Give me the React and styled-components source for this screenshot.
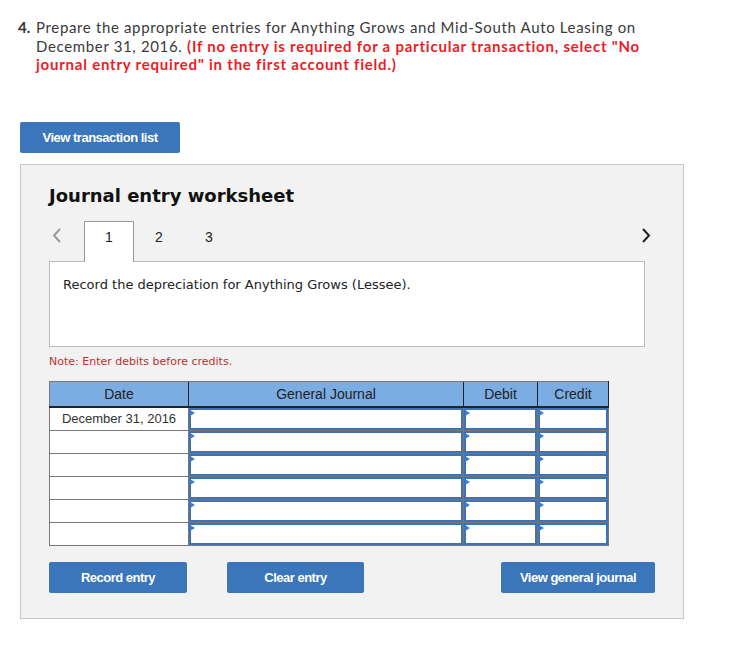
import React from 'react';
import styled, { createGlobalStyle } from 'styled-components';

const GlobalStyle = createGlobalStyle`
  body {
    margin: 0;
    background: #fff;
    font-family: "Liberation Sans", Arial, sans-serif;
  }
`;

const Page = styled.div`
  padding: 18px 0 0 20px;
  width: 739px;
  box-sizing: border-box;
`;

const Question = styled.p`
  margin: 0 0 0 -2px;
  padding-left: 18px;
  font-family: Lato, "Open Sans", sans-serif;
  font-size: 15px;
  line-height: 18.5px;
  letter-spacing: 0.65px;
  color: #3a3a3a;
  white-space: nowrap;
`;

const Num = styled.b`
  display: inline-block;
  width: 18px;
  margin-left: -18px;
  letter-spacing: 0;
  color: #333;
`;

const Warn = styled.span`
  color: #ee1c25;
  font-weight: 700;
  letter-spacing: 0.78px;
`;

const Button = styled.button`
  height: 31px;
  width: ${(p) => p.$w}px;
  border: none;
  border-radius: 2px;
  background: #3a76b9;
  color: #fff;
  font-family: "Liberation Sans Narrow", "Arial Narrow", "Liberation Sans", sans-serif;
  font-weight: 700;
  font-size: 13px;
  letter-spacing: -0.5px;
  padding: 0;
  cursor: pointer;
`;

const TopButton = styled(Button)`
  margin-top: 48px;
`;

const Panel = styled.div`
  margin-top: 11px;
  width: 664px;
  height: 455px;
  box-sizing: border-box;
  border: 1px solid #c8c8c8;
  background: #f2f2f2;
  padding: 20px 28px 0 28px;
`;

const Title = styled.h2`
  margin: 0;
  font-family: "DejaVu Sans", Verdana, sans-serif;
  font-size: 18px;
  line-height: 22px;
  color: #111;
`;

const TabRow = styled.div`
  margin-top: 13px;
  display: flex;
  align-items: flex-end;
  width: 606px;
  height: 41px;
`;

const Arrow = styled.div`
  width: 35px;
  height: 41px;
  display: flex;
  align-items: flex-start;
  padding-top: 8px;
  box-sizing: border-box;
  justify-content: ${(p) => (p.$right ? 'flex-end' : 'flex-start')};
  padding-left: ${(p) => (p.$right ? 0 : 3)}px;
  padding-right: ${(p) => (p.$right ? 4 : 0)}px;
  margin-left: ${(p) => (p.$right ? 'auto' : 0)};
`;

const Tab = styled.div`
  width: 50px;
  height: 41px;
  box-sizing: border-box;
  padding-top: 7px;
  text-align: center;
  font-size: 14px;
  line-height: 16px;
  color: #222;
  background: ${(p) => (p.$active ? '#fff' : 'transparent')};
  border: 1px solid ${(p) => (p.$active ? '#9a9a9a' : 'transparent')};
  border-bottom: none;
  position: relative;
  z-index: 1;
  margin-bottom: -1px;
`;

const Prompt = styled.div`
  width: 596px;
  height: 86px;
  box-sizing: border-box;
  background: #fff;
  border: 1px solid #bdbdbd;
  padding: 14px 13px;
  font-family: "DejaVu Sans", Verdana, sans-serif;
  font-size: 13px;
  line-height: 17px;
  color: #222;
`;

const Note = styled.div`
  margin-top: 8px;
  font-family: "DejaVu Sans", Verdana, sans-serif;
  font-size: 11px;
  line-height: 14px;
  color: #c0302e;
`;

const Table = styled.table`
  margin-top: 12px;
  border-collapse: collapse;
  width: 559px;
  table-layout: fixed;
  border: 1px solid #777;
`;

const Th = styled.th`
  height: 24px;
  padding: 0;
  background: #7badE3;
  font-weight: 400;
  font-size: 14px;
  color: #222;
  border-top: 1px solid #777;
  border-bottom: 2px solid #222;
  border-left: 1px solid #222;
  &:first-child {
    border-left: 1px solid #777;
  }
  &:last-child {
    border-right: 1px solid #222;
  }
`;

const DateCell = styled.td`
  height: 22px;
  padding: 0;
  background: #fff;
  border: 1px solid #777;
  text-align: center;
  font-size: 13px;
  color: #333;
`;

const InputCell = styled.td`
  height: 22px;
  padding: 0;
  border: 1px solid #777;
  background: #fff;
`;

const Field = styled.div`
  position: relative;
  height: 22px;
  box-sizing: border-box;
  border: 2px solid #3f72b4;
  background: #fff;
`;

const Caret = styled.span`
  position: absolute;
  left: -1px;
  top: 0;
  width: 0;
  height: 0;
  border-top: 3px solid transparent;
  border-bottom: 3px solid transparent;
  border-left: 5px solid #3a7bd5;
`;

const ButtonRow = styled.div`
  margin-top: 16px;
  display: flex;
  width: 606px;
  gap: 40px;
`;

const PushRight = styled.div`
  margin-left: auto;
`;

const Chevron = ({ dir, color }) => (
  <svg width="10" height="15" viewBox="0 0 10 15">
    <path
      d={dir === 'left' ? 'M8 1 L2 7.5 L8 14' : 'M2 1 L8 7.5 L2 14'}
      fill="none"
      stroke={color}
      strokeWidth="2"
    />
  </svg>
);

const rows = ['December 31, 2016', '', '', '', '', ''];

const App = () => {
  return (
    <Page>
      <GlobalStyle />
      <Question>
        <Num>4.</Num>Prepare the appropriate entries for Anything Grows and Mid-South Auto Leasing on
        <br />
        December 31, 2016. <Warn>(If no entry is required for a particular transaction, select "No</Warn>
        <br />
        <Warn>journal entry required" in the first account field.)</Warn>
      </Question>
      <TopButton $w={160}>View transaction list</TopButton>
      <Panel>
        <Title>Journal entry worksheet</Title>
        <TabRow>
          <Arrow>
            <Chevron dir="left" color="#9a9a9a" />
          </Arrow>
          <Tab $active>1</Tab>
          <Tab>2</Tab>
          <Tab>3</Tab>
          <Arrow $right>
            <Chevron dir="right" color="#222" />
          </Arrow>
        </TabRow>
        <Prompt>Record the depreciation for Anything Grows (Lessee).</Prompt>
        <Note>Note: Enter debits before credits.</Note>
        <Table>
          <colgroup>
            <col style={{ width: 139 }} />
            <col style={{ width: 275 }} />
            <col style={{ width: 74 }} />
            <col style={{ width: 71 }} />
          </colgroup>
          <thead>
            <tr>
              <Th>Date</Th>
              <Th>General Journal</Th>
              <Th>Debit</Th>
              <Th>Credit</Th>
            </tr>
          </thead>
          <tbody>
            {rows.map((d, i) => (
              <tr key={i}>
                <DateCell>{d}</DateCell>
                {[0, 1, 2].map((c) => (
                  <InputCell key={c}>
                    <Field>
                      <Caret />
                    </Field>
                  </InputCell>
                ))}
              </tr>
            ))}
          </tbody>
        </Table>
        <ButtonRow>
          <Button $w={138}>Record entry</Button>
          <Button $w={137}>Clear entry</Button>
          <PushRight>
            <Button $w={154}>View general journal</Button>
          </PushRight>
        </ButtonRow>
      </Panel>
    </Page>
  );
};

export default App;
